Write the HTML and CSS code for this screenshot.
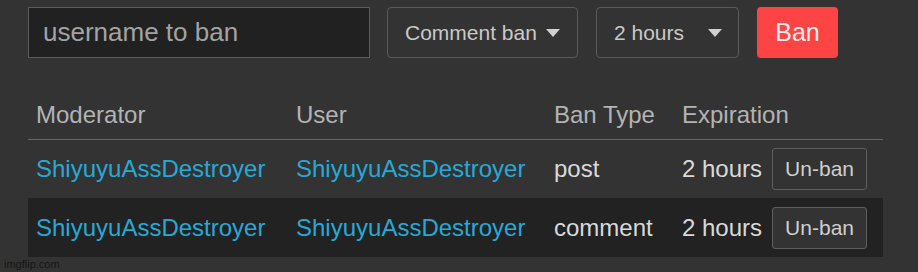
FILE: index.html
```html
<!DOCTYPE html>
<html>
<head>
<meta charset="utf-8">
<link rel="stylesheet" href="styles.css">
</head>
<body>
<div class="page">
  <form class="ban-form">
    <input class="user-input" type="text" placeholder="username to ban">
    <div class="select select-type"><span>Comment ban</span><i class="caret"></i></div>
    <div class="select select-time"><span>2 hours</span><i class="caret"></i></div>
    <button class="ban-btn" type="button">Ban</button>
  </form>
  <table class="bans">
    <thead>
      <tr>
        <th class="c-mod">Moderator</th>
        <th class="c-user">User</th>
        <th class="c-type">Ban Type</th>
        <th class="c-exp">Expiration</th>
      </tr>
    </thead>
    <tbody>
      <tr class="row">
        <td><a class="link">ShiyuyuAssDestroyer</a></td>
        <td><a class="link">ShiyuyuAssDestroyer</a></td>
        <td>post</td>
        <td><div class="exp"><span>2 hours</span><button class="unban" type="button">Un-ban</button></div></td>
      </tr>
      <tr class="row alt">
        <td><a class="link">ShiyuyuAssDestroyer</a></td>
        <td><a class="link">ShiyuyuAssDestroyer</a></td>
        <td>comment</td>
        <td><div class="exp"><span>2 hours</span><button class="unban" type="button">Un-ban</button></div></td>
      </tr>
    </tbody>
  </table>
</div>
<div class="watermark">imgflip.com</div>
</body>
</html>
```

FILE: styles.css
```css
html, body {
  margin: 0;
  padding: 0;
  background: #333333;
  font-family: "Liberation Sans", Arial, Helvetica, sans-serif;
  height: 100%;
  overflow: hidden;
}
.page {
  padding: 7px 0 0 28px;
}
.ban-form {
  display: flex;
  align-items: stretch;
  height: 51px;
  margin: 0;
}
.user-input {
  box-sizing: border-box;
  width: 342px;
  height: 51px;
  margin: 0 17px 0 0;
  padding: 0 0 0 14px;
  background: #212121;
  border: 1px solid #5c5c5c;
  border-radius: 0;
  font-family: inherit;
  font-size: 26px;
  color: #ddd;
  outline: none;
}
.user-input::placeholder {
  color: #a3a3a3;
}
.select {
  box-sizing: border-box;
  display: flex;
  align-items: center;
  justify-content: space-between;
  height: 51px;
  padding: 0 17px 0 17px;
  border: 1px solid #5a5a5a;
  border-radius: 4px;
  background: #333;
  color: #c9c9c9;
  font-size: 21px;
  margin-right: 18px;
}
.select-type { width: 191px; }
.select-time { width: 143px; padding-right: 16px; }
.caret {
  display: block;
  width: 0;
  height: 0;
  border-left: 7px solid transparent;
  border-right: 7px solid transparent;
  border-top: 8px solid #d0d0d0;
  margin-top: 1px;
}
.ban-btn {
  box-sizing: border-box;
  width: 81px;
  height: 51px;
  border: 0;
  border-radius: 4px;
  background: #fc4444;
  color: #fbecec;
  font-family: inherit;
  font-size: 25px;
  padding: 0;
}
.bans {
  border-collapse: collapse;
  width: 855px;
  table-layout: fixed;
}
.bans th, .bans td {
  box-sizing: border-box;
}
.c-mod { width: 260px; }
.c-user { width: 258px; }
.c-type { width: 128px; }
.c-exp { width: 209px; }
.bans th {
  height: 81px;
  padding: 0 0 10px 8px;
  vertical-align: bottom;
  text-align: left;
  font-weight: normal;
  font-size: 24px;
  line-height: 28px;
  color: #b3b3b3;
  border-bottom: 1px solid #666;
}
.bans td {
  height: 59px;
  padding: 0 0 0 8px;
  vertical-align: middle;
  font-size: 24px;
  line-height: 28px;
  color: #d9d9d9;
  white-space: nowrap;
}
.row.alt td {
  background: #222222;
}
.link {
  color: #27a9d8;
  text-decoration: none;
}
.exp {
  display: flex;
  align-items: center;
  gap: 10px;
}
.unban {
  box-sizing: border-box;
  width: 95px;
  height: 42px;
  border: 1px solid #5e5e5e;
  border-radius: 3px;
  background: #333;
  color: #cfcfcf;
  font-family: inherit;
  font-size: 21px;
  padding: 0;
}
.watermark {
  position: absolute;
  left: 4px;
  top: 257px;
  font-size: 11px;
  line-height: 14px;
  color: #161616;
}
```
